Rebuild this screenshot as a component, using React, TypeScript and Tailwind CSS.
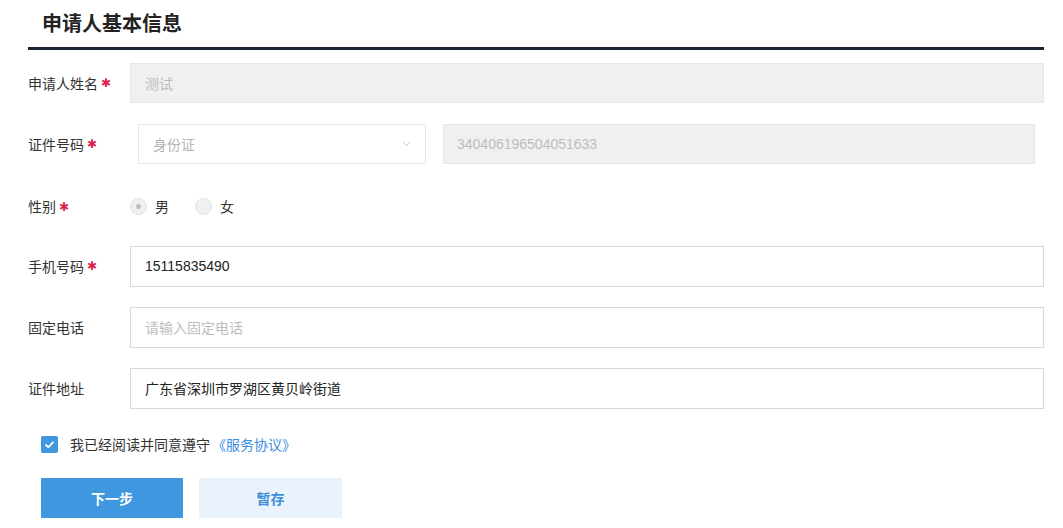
import React from "react";

const font = { fontFamily: '"Noto Sans CJK SC", "Noto Sans", sans-serif' };

function Label({ text, required }: { text: string; required?: boolean }) {
  return (
    <div className="w-[102px] shrink-0 text-[14px] text-[#333] flex items-center">
      {text}
      {required && (
        <span className="text-[#d8234e] ml-[3px] text-[12px] leading-none" style={{ fontFamily: '"DejaVu Sans", sans-serif' }}>
          ✱
        </span>
      )}
    </div>
  );
}

function Radio({ label, checked }: { label: string; checked?: boolean }) {
  return (
    <label className="flex items-center gap-[8px] mr-[26px]">
      <span className="w-[17px] h-[17px] rounded-full bg-[#f0f0f0] border border-[#e2e2e2] flex items-center justify-center">
        {checked && <span className="w-[5px] h-[5px] rounded-full bg-[#bdbdbd]" />}
      </span>
      <span className="text-[14px] text-[#333]">{label}</span>
    </label>
  );
}

export default function App() {
  return (
    <div className="w-[1063px] h-[528px] bg-white overflow-hidden" style={font}>
      <div className="ml-[28px] w-[1016px]">
        <div className="h-[50px] pl-[14px] pt-[9px] border-b-[3px] border-[#1c2433]">
          <h1 className="text-[20px] leading-[28px] font-bold text-[#222]">申请人基本信息</h1>
        </div>

        <div className="mt-[13px] flex flex-col gap-[21px]">
          <div className="flex items-center h-[40px]">
            <Label text="申请人姓名" required />
            <div className="flex-1 h-[40px] bg-[#f0f0f0] border border-[#e6e6e6] flex items-center px-[14px] text-[14px] text-[#bdbdbd]">
              测试
            </div>
          </div>

          <div className="flex items-center h-[40px]">
            <Label text="证件号码" required />
            <div className="ml-[8px] w-[288px] h-[40px] border border-[#e6e6e6] bg-white flex items-center justify-between pl-[14px] pr-[14px] text-[14px] text-[#b3b3b3]">
              <span>身份证</span>
              <svg width="9" height="6" viewBox="0 0 9 6" fill="none">
                <path d="M1 1l3.5 3.5L8 1" stroke="#c8c8c8" strokeWidth="1" />
              </svg>
            </div>
            <div className="ml-[17px] w-[592px] h-[40px] bg-[#f0f0f0] border border-[#e6e6e6] flex items-center px-[13px] text-[14px] text-[#bdbdbd]" style={{ fontFamily: '"Liberation Sans", Arial, sans-serif' }}>
              340406196504051633
            </div>
          </div>

          <div className="flex items-center h-[40px] pt-[3px]">
            <Label text="性别" required />
            <Radio label="男" checked />
            <Radio label="女" />
          </div>

          <div className="flex items-center h-[40px]">
            <Label text="手机号码" required />
            <div className="flex-1 h-[41px] border border-[#d9d9d9] bg-white flex items-center px-[14px] text-[14px] text-[#222]" style={{ fontFamily: '"Liberation Sans", Arial, sans-serif' }}>
              15115835490
            </div>
          </div>

          <div className="flex items-center h-[40px]">
            <Label text="固定电话" />
            <div className="flex-1 h-[41px] border border-[#d9d9d9] bg-white flex items-center px-[14px] text-[14px] text-[#bdbdbd]">
              请输入固定电话
            </div>
          </div>

          <div className="flex items-center h-[40px]">
            <Label text="证件地址" />
            <div className="flex-1 h-[41px] border border-[#d9d9d9] bg-white flex items-center px-[14px] text-[14px] text-[#222]">
              广东省深圳市罗湖区黄贝岭街道
            </div>
          </div>
        </div>

        <div className="mt-[26px] ml-[13px] flex items-center">
          <span className="w-[17px] h-[17px] bg-[#3f97e0] rounded-[2px] flex items-center justify-center">
            <svg width="11" height="9" viewBox="0 0 11 9" fill="none">
              <path d="M1.5 4.5l2.8 2.8L9.5 1.8" stroke="#fff" strokeWidth="1.8" />
            </svg>
          </span>
          <span className="ml-[12px] text-[14px] text-[#333]">我已经阅读并同意遵守</span>
          <span className="ml-[2px] text-[14px] text-[#3a8ee0]">《服务协议》</span>
        </div>

        <div className="mt-[23px] ml-[13px] flex gap-[16px]">
          <button className="w-[142px] h-[40px] bg-[#3f97e0] text-white text-[14px] font-bold">下一步</button>
          <button className="w-[143px] h-[40px] bg-[#eaf3fc] text-[#3f8fd8] text-[14px] font-bold">暂存</button>
        </div>
      </div>
    </div>
  );
}
